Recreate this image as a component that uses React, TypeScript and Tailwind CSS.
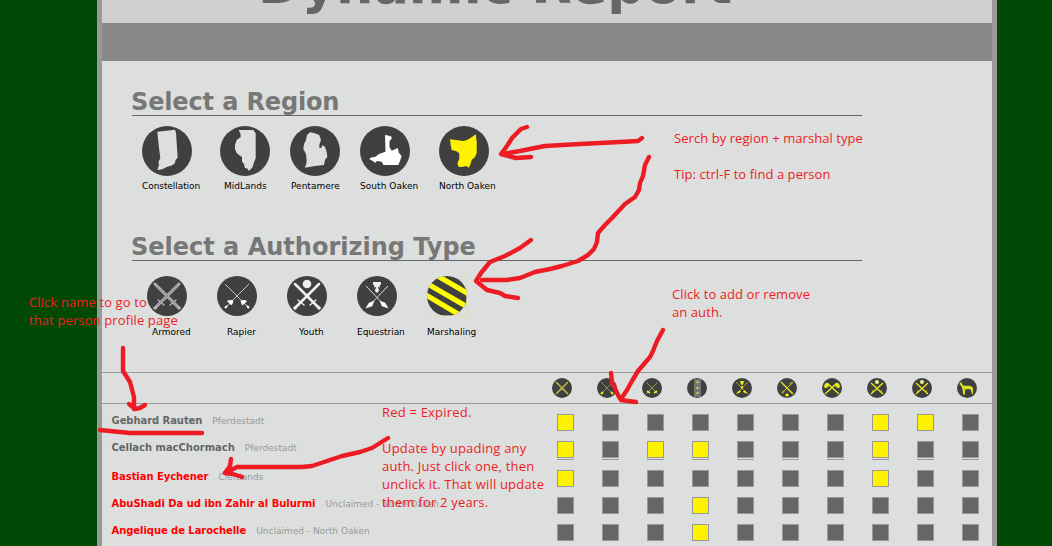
import type { ReactNode } from "react";

const verdana = "font-['DejaVu_Sans',sans-serif]";

const regions = [
  { name: "Constellation", cell: "w-[78px]", label: "tracking-[-0.07px]", fill: "#dedede", d: "M15.3 5.7 33 3.7 34 7 35.7 31.7 33.5 34 33 37 30.7 39 28 40 25.3 40.7 20.3 43.3 15.3 44 17 39 16.5 36 18.3 32 17 22Z" },
  { name: "MidLands", cell: "w-[70px]", label: "pl-1", fill: "#dedede", d: "M18.7 4H33.3L35.7 7.3V32.3L34 36 32.7 41 29 45 27 42.3 25 42.3 24 38 22 35.5 22 31 19 29 16.7 27 15 23V19L16.7 14 20.7 11 20.5 8Z" },
  { name: "Pentamere", cell: "w-[70px]", label: "pl-px", fill: "#dedede", d: "M20 6.3 24 7 29.3 9 31 14 29.5 18 29.3 22H31L32.7 19 35 21 36.7 26 37.3 31 35 34 34 39 25 40 15 41.7 16.7 36 16 28 13.3 23 14 18 16 14 17 9Z" },
  { name: "South Oaken", cell: "w-[79px]", label: "tracking-[0.05px]", fill: "#ffffff", d: "M25 9 28 9.500 31.7 10.7 31.5 13 29.5 15 29.5 21 31.700 24.7 37.7 22 39 27 41.7 30 40 35 38.3 39H23.5L21.7 35.7 17 35 15 37 13 35 9.3 33.3 11 31.5 15 31 19 28 25.500 25.7Z" },
  { name: "North Oaken", cell: "w-[78px]", label: "", fill: "#fff200", d: "M11 13.3 17 14 24.3 15 28 14 33 11 36.7 8.3 37.700 16V27.3L36 31 32.7 34 31.5 38 30 41.7 27 40 23 41 19.3 40.7 18.5 37 20.3 33 20.3 27.3 17 25 12.7 24 11.7 19Z" },
];

const colors = { armored: "#b5b5b5", bright: "#f2f2f2" };

function Disc({ children, box, className }: { children: ReactNode; box: number; className: string }) {
  return (
    <svg viewBox={`0 0 ${box} ${box}`} className={`block shrink-0 ${className}`} fill="none">
      <circle cx={box / 2} cy={box / 2} r={box / 2} fill="#404040" />
      {children}
    </svg>
  );
}

function Swords({ color, blade = 3 }: { color: string; blade?: number }) {
  return (
    <g stroke={color} strokeLinecap="round">
      <path d="M8 8 31 31M32 8 9 31" strokeWidth={blade} />
      <path d="m11 24 6 5M23 29l6-5" strokeWidth="1.3" />
      <path d="m8 32 .1 0M32 32l.1 0" strokeWidth="3.5" />
    </g>
  );
}

const types = [
  {
    name: "Armored",
    label: "pl-[5px]",
    art: (
      <>
        <Swords color={colors.armored} blade={3} />
        <path d="m9 9 21 21M31 9 10 30" stroke="#7c7c7c" strokeWidth=".8" />
      </>
    ),
  },
  {
    name: "Rapier",
    label: "pl-[10px]",
    art: (
      <>
        <path d="M8 8 32 32M32 8 8 32" stroke="#c6c6c6" strokeWidth="1" />
        <path d="m10.500 25 4 4 1.500-4-2-.500zM29.500 25l-4 4-1.500-4 2-.500z" fill="#fff" stroke="#fff" />
        <path d="m10 30-2 2M30 30l2 2" stroke="#fff" strokeWidth="2" />
      </>
    ),
  },
  {
    name: "Youth",
    label: "pl-[12px]",
    art: (
      <>
        <Swords color={colors.bright} blade={2.5} />
        <circle cx="20" cy="8" r="4.3" fill="#eee" />
      </>
    ),
  },
  {
    name: "Equestrian",
    label: "tracking-[-0.05px]",
    art: (
      <>
        <path d="M9 10 29 31M31 10 11 31" stroke="#ddd" strokeWidth="1" />
        <path d="m12 27 5-2-2 5-6 2zM28 27l-5-2 2 5 6 2z" fill="#fff" stroke="#fff" strokeWidth=".5" />
        <path d="M16.500 6v2.500h7V6M17.500 9l.8 3 .7 4h2l.7-4 .8-3z" fill="#eee" stroke="#eee" strokeWidth="1" />
        <path d="M18.500 11v2M21.500 11v2" stroke="#404040" strokeWidth=".8" />
      </>
    ),
  },
  {
    name: "Marshaling",
    label: "",
    art: (
      <>
        <clipPath id="marshal-disc"><circle cx="20" cy="20" r="20" /></clipPath>
        <path clipPath="url(#marshal-disc)" d="M9-1 45 20M-1 7 42 32M-1 19 31 38" stroke="#ffff00" strokeWidth="5.2" />
        <path d="M39.5 0v39.5H0" stroke="#dcdc9c" strokeWidth=".6" />
      </>
    ),
  },
];

const y = "#ecec1a";
const headerArt: ReactNode[] = [
  <g stroke="#b9b34a" strokeWidth="1.7"><path d="m4 4 12 12M16 4 4 16" /><path d="m7 13 3-2 3 2" strokeWidth="1" /></g>,
  <g stroke="#9b9a50" strokeWidth=".9"><path d="m4 4 12 12M16 4 4 16" /><path d="m4 16 2-2M16 16l-2-2" stroke={y} strokeWidth="2" /></g>,
  <g stroke="#a3a04b" strokeWidth=".9"><path d="m4 4 12 12M16 4 4 16" /><path d="m5 13 3 2M15 13l-3 2" stroke={y} strokeWidth="1.6" /></g>,
  <g><path d="M7 1h7v18H7z" fill="#777" /><path d="M9.500 3h2v2h-2zM9.500 9h2v2h-2zM9.500 14h2v2h-2z" fill="#d6d43d" /></g>,
  <g stroke="#aaa516"><path d="m4 4 12 12M16 4 4 16" strokeWidth="1" /><path d="M8.500 3.500h3l-1 3h-1z" fill={y} stroke={y} /><path d="m5.500 15 3-2M14.500 15l-3-2M10 8v3" stroke={y} strokeWidth="1.600" /></g>,
  <g stroke="#d9d728"><path d="m4 4 12 12" strokeWidth="1.6" /><path d="M16 4 5 15" strokeWidth=".9" /><path d="m15 4.500-2 2M5 15l2-2" stroke="#a19d2c" strokeWidth="2.2" /><circle cx="10" cy="17" r="1.6" fill="#ff0" stroke="none" /></g>,
  <g stroke={y}><path d="m5 5 12 11M15 5 3 16" strokeWidth="1.3" /><path d="m2 8 2-3 3 1-1 3-3 1zM18 8l-2-3-3 1 1 3 3 1z" fill={y} strokeWidth=".4" /></g>,
  <g stroke={y}><path d="m4 5 12 11M16 5 4 16" strokeWidth="1.3" /><path d="M5 13h1M14 13h1" /><circle cx="10" cy="4" r="2" fill="#f0f08a" stroke="none" /></g>,
  <g stroke={y}><path d="m4 5 12 11M16 5 4 16" strokeWidth="1.2" /><path d="M5 13h1M14 13h1" /><circle cx="10" cy="4" r="2" fill="#f0f08a" stroke="none" /></g>,
  <path d="M2 6 4 4l2 3.500 8 .5 2 2v6h-1l-1-4-2-1-4 .500V16.500H6.200L5.500 11 4 7.500z" fill="#dfdf28" />,
];

const people = [
  { name: "Gebhard Rauten", group: "Pferdestadt", expired: false, auths: [0, 7, 8], row: "h-[27px]", tracking: "tracking-[-0.07px]" },
  { name: "Cellach macChormach", group: "Pferdestadt", expired: false, auths: [0, 2, 3, 7], row: "h-[29px]", tracking: "tracking-[-0.03px]", divided: true },
  { name: "Bastian Eychener", group: "Cleftlands", expired: true, auths: [0, 7], row: "h-[27px]", tracking: "tracking-[-0.06px]" },
  { name: "AbuShadi Da ud ibn Zahir al Bulurmi", group: "Unclaimed - North Oaken", expired: true, auths: [3], row: "h-[27px]", tracking: "tracking-[-0.04px]" },
  { name: "Angelique de Larochelle", group: "Unclaimed - North Oaken", expired: true, auths: [3], row: "h-[27px]", tracking: "tracking-[-0.06px]" },
];

function Heading({ children, className }: { children: ReactNode; className: string }) {
  return (
    <h2 className={`h-[29px] w-[730px] border-b border-[#666] text-[24px] leading-[30px] font-bold whitespace-nowrap text-[#777] ${className}`}>
      <span className="-ml-px">{children}</span>
    </h2>
  );
}

const marks = [
  "M642 138 638 141 620 142 580 144 545 146 520 151 502 154",
  "M527 127 521 129 512 138 507 146 501 154 516 158 531 157",
  "M649 157 645 165 643 176 640 183 639 190 635 197 625 204 612 218 605 225 598 233 597 242 594 249 588 255 578 261 562 266 550 269 535 272 520 278 507 280 482 280",
  "M531 240 520 248 505 256 490 262 481 273 476 281 487 290 500 293 505 296 518 298",
  "M663 330 657 341 653 351 650 357 638 371 632 381 627 390 621 399",
  "M611 373 612 382 618 395 621 400 628 401 636 402",
  "M123 348V371L130 382 134 397V409",
  "M129 404 135 409 140 408 145 405",
  "M100 430 110 431 130 433H202",
  "M388 438 380 443 372 448 360 452 342 456 327 461 312 466 302 467H237L225 473",
  "M231 459 230 466 225 473 233 474 242 477",
];

function Note({ className, children }: { className: string; children: ReactNode }) {
  return (
    <p className={`absolute font-['Open_Sans',sans-serif] text-[13px] leading-[18px] whitespace-pre text-[#ed1c24] ${className}`}>
      {children}
    </p>
  );
}

export default function App() {
  return (
    <div className={`relative h-[546px] w-[1052px] overflow-hidden bg-[#004a06] pl-[97px] ${verdana}`}>
      <main className="h-full w-[900px] border-x-[5px] border-[#999] bg-[#dddfde]">
        <header className="flex h-[23px] items-end overflow-hidden bg-[#d0d0d0] pl-[156px]">
          <h1 className="mb-[10px] text-[52.6px] leading-[56px] font-bold whitespace-nowrap text-[#666]">Dynamic Report</h1>
        </header>
        <div className="h-[38px] bg-[#888]" />

        <section className="h-[145px] pt-[26px] pl-[30px]">
          <Heading className="tracking-[-0.14px]">Select a Region</Heading>
          <div className="flex pt-[10px] pl-[10px]">
            {regions.map((r) => (
              <div key={r.name} className={`shrink-0 ${r.cell}`}>
                <Disc box={50} className="size-[50px]"><path d={r.d} fill={r.fill} /></Disc>
                <div className={`mt-1 text-[9px] leading-[12px] whitespace-nowrap text-black ${r.label}`}>{r.name}</div>
              </div>
            ))}
          </div>
        </section>

        <section className="h-[166px] pt-[26px] pl-[30px]">
          <Heading className="tracking-normal">Select a Authorizing Type</Heading>
          <div className="flex pt-[15px] pl-[15px]">
            {types.map((t) => (
              <div key={t.name} className="w-[70px] shrink-0">
                <Disc box={40} className="size-10">{t.art}</Disc>
                <div className={`mt-[10px] text-[9px] leading-[12px] whitespace-nowrap text-black ${t.label}`}>{t.name}</div>
              </div>
            ))}
          </div>
        </section>

        <div className="flex h-8 items-center border-y border-[#999] pl-[450px]">
          {headerArt.map((art, i) => (
            <div key={i} className="w-[45px] shrink-0"><Disc box={20} className="size-5">{art}</Disc></div>
          ))}
        </div>
        <div className="pt-[10px]">
          {people.map((p) => (
            <div key={p.name} className={`flex ${p.row}`}>
              <div className="flex h-[14px] w-[455px] shrink-0 items-baseline gap-[10px] pl-[9.5px] leading-[14px] whitespace-nowrap">
                <a className={`text-[10px] font-bold ${p.tracking} ${p.expired ? "text-[#ff0000]" : "text-[#666]"}`}>{p.name}</a>
                <span className="text-[9px] text-[#999]">{p.group}</span>
              </div>
              {headerArt.map((_, i) => (
                <div key={i} className="w-[45px] shrink-0">
                  <button className={`block size-[17px] border border-[#999] ${p.auths.includes(i) ? "bg-[#fff200]" : "bg-[#666]"}`} />
                  {p.divided && <div className="mt-px h-px w-[17px] bg-[#999]" />}
                </div>
              ))}
            </div>
          ))}
        </div>
      </main>

      <svg className="absolute inset-0 size-full" viewBox="0 0 1052 546" fill="none">
        {marks.map((d) => (
          <path key={d} d={d} stroke="#ed1c24" strokeWidth="4.4" strokeLinecap="round" strokeLinejoin="round" />
        ))}
      </svg>
      <Note className="top-[129px] left-[674px] tracking-[0.06px]">{"Serch by region + marshal type\n\nTip: ctrl-F to find a person"}</Note>
      <Note className="top-[285px] left-[672px] tracking-[0.08px]">{"Click to add or remove\nan auth."}</Note>
      <Note className="top-[293px] left-[29px] tracking-[0.12px]">{"Click name to go to\nthat person profile page"}</Note>
      <Note className="top-[403px] left-[382px] tracking-[0.2px]">{"Red = Expired.\n\nUpdate by upading any\nauth. Just click one, then\nunclick it. That will update\nthem for 2 years."}</Note>
    </div>
  );
}
